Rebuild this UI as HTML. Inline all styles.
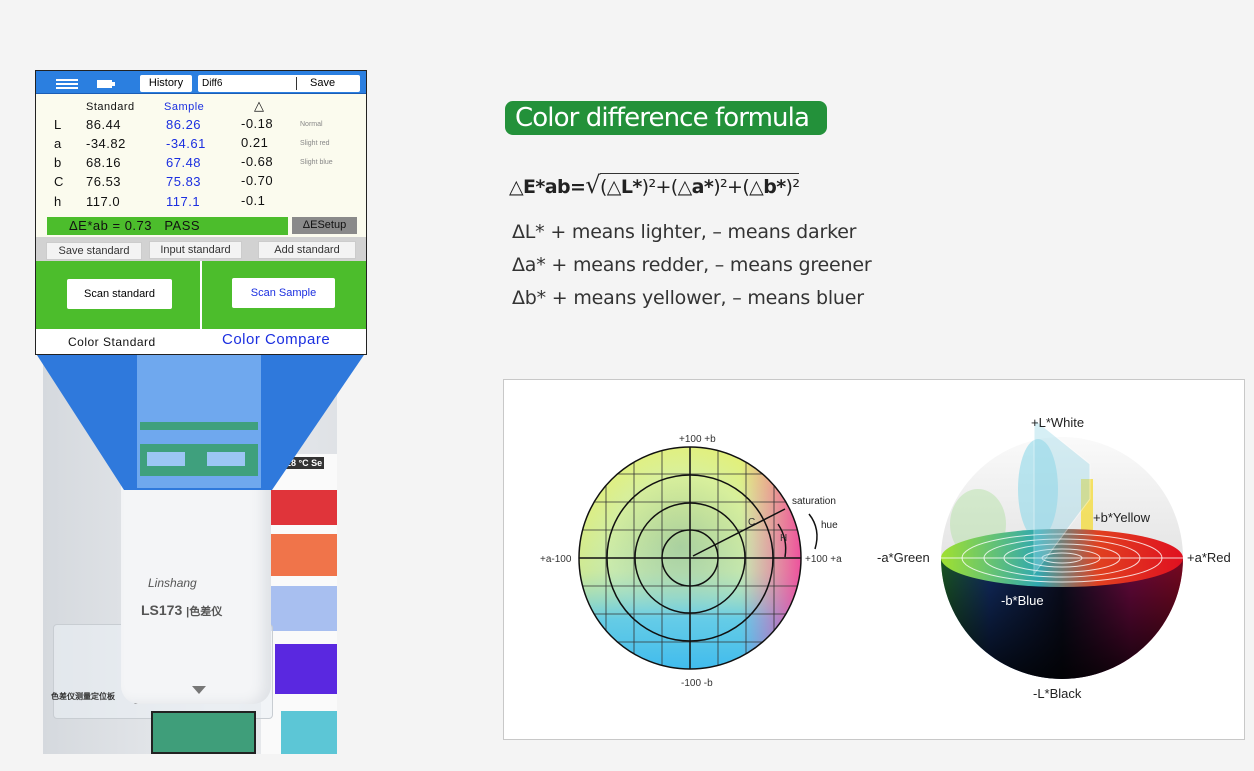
<!DOCTYPE html>
<html><head><meta charset="utf-8"><style>
*{margin:0;padding:0;box-sizing:border-box}
body{width:1254px;height:771px;background:#f4f4f4;position:relative;overflow:hidden;font-family:"Liberation Sans",sans-serif}
.a{position:absolute}
.t{position:absolute;font-size:13px;color:#111;white-space:nowrap;letter-spacing:0.5px}
.bl{color:#1b2fe0}
.sm{font-size:7px;color:#888;letter-spacing:0}
.btn{position:absolute;background:#f3f3f3;border:1px solid #ccc;font-size:11px;color:#333;text-align:center;line-height:16px}
.rt{position:absolute;font-size:19px;color:#333;white-space:nowrap;font-family:"DejaVu Sans","Liberation Sans",sans-serif;letter-spacing:-0.2px}
</style></head><body>

<!-- photo -->
<div class="a" style="left:43px;top:354px;width:294px;height:400px;background:linear-gradient(90deg,#d5d9de,#e9ebee 60%,#dfe2e6);overflow:hidden">
  <div class="a" style="left:218px;top:100px;width:80px;height:300px;background:#fafafa"></div>
  <div class="a" style="left:225px;top:103px;font-size:9px;font-weight:bold;color:#fff;background:#333;padding:1px 2px">n T 28 °C Se</div>
  <div class="a" style="left:223px;top:136px;width:75px;height:35px;background:#e0343a"></div>
  <div class="a" style="left:222px;top:180px;width:76px;height:42px;background:#f0744a"></div>
  <div class="a" style="left:223px;top:232px;width:75px;height:45px;background:#a8bff0"></div>
  <div class="a" style="left:232px;top:290px;width:66px;height:50px;background:#5a28e0"></div>
  <div class="a" style="left:238px;top:357px;width:60px;height:43px;background:#5cc6d6"></div>
  <div class="a" style="left:10px;top:270px;width:220px;height:95px;background:rgba(235,240,245,.6);border:1px solid #c8cdd2;border-radius:4px"></div>
  <div class="a" style="left:8px;top:337px;font-size:8px;font-weight:bold;color:#333">色差仪测量定位板</div>
  <div class="a" style="left:90px;top:343px;font-size:8px;font-weight:bold;color:#333">Chameleon-T Violet</div>
  <div class="a" style="left:108px;top:357px;width:105px;height:43px;background:#3f9e7a;border:2px solid #222"></div>
  <div class="a" style="left:78px;top:100px;width:150px;height:250px;background:#f4f5f7;border-radius:10px 10px 18px 18px;box-shadow:inset -8px 0 12px #dfe2e6"></div>
  <div class="a" style="left:83px;top:100px;width:142px;height:18px;background:#1c1c1e;border-radius:0 0 10px 10px"></div>
  <div class="a" style="left:105px;top:222px;font-size:12px;color:#555;font-style:italic">Linshang</div>
  <div class="a" style="left:98px;top:248px;font-size:14px;font-weight:bold;color:#555">LS173 <span style="font-size:11px">|色差仪</span></div>
  <div class="a" style="left:149px;top:332px;width:0;height:0;border-left:7px solid transparent;border-right:7px solid transparent;border-top:8px solid #777"></div>
</div>

<!-- blue wedge -->
<svg class="a" style="left:0;top:0" width="400" height="520"><polygon points="35,352 366,352 272,490 124,490" fill="#2f79dc"/></svg>
<div class="a" style="left:137px;top:352px;width:124px;height:136px;background:#6fa8ee;font-size:5px;color:#225">
  <div class="a" style="left:3px;top:70px;width:118px;height:8px;background:#3fa07d"></div>
  <div class="a" style="left:3px;top:92px;width:118px;height:32px;background:#3fa07d"></div>
  <div class="a" style="left:10px;top:100px;width:38px;height:14px;background:#9cc6f4"></div>
  <div class="a" style="left:70px;top:100px;width:38px;height:14px;background:#9cc6f4"></div>
</div>

<!-- screen -->
<div class="a" style="left:35px;top:70px;width:332px;height:285px;border:1px solid #222;background:#fff">
  <div class="a" style="left:0;top:0;width:330px;height:23px;background:#2b7fe0;border-bottom:1px solid #1b5db5"></div>
  <div class="a" style="left:20px;top:8px;width:22px;height:10px;border-top:2px solid #fff;border-bottom:2px solid #fff"><div style="margin-top:2px;border-top:2px solid #fff"></div></div>
  <div class="a" style="left:61px;top:9px;width:15px;height:8px;background:#fff"></div><div class="a" style="left:76px;top:11px;width:3px;height:4px;background:#fff"></div>
  <div class="a" style="left:104px;top:4px;width:52px;height:17px;background:#fff;border-radius:2px;font-size:11px;text-align:center;line-height:17px">History</div>
  <div class="a" style="left:162px;top:4px;width:162px;height:17px;background:#fff;border-radius:2px;font-size:10px;line-height:17px;padding-left:4px">Diff6<span class="a" style="left:98px;top:2px;height:13px;border-left:1px solid #333"></span><span class="a" style="left:112px;font-size:11px">Save</span></div>
  <div class="a" style="left:0;top:23px;width:330px;height:143px;background:#fbfbee"></div>
  <div class="t" style="left:50px;top:30px;font-size:11px">Standard</div>
  <div class="t bl" style="left:128px;top:30px;font-size:11px">Sample</div>
  <div class="t" style="left:218px;top:27px">△</div>
  <div class="t" style="left:18px;top:46px">L</div><div class="t" style="left:50px;top:46px">86.44</div><div class="t bl" style="left:130px;top:46px">86.26</div><div class="t" style="left:205px;top:45px">-0.18</div><div class="t sm" style="left:264px;top:50px">Normal</div>
  <div class="t" style="left:18px;top:65px">a</div><div class="t" style="left:50px;top:65px">-34.82</div><div class="t bl" style="left:130px;top:65px">-34.61</div><div class="t" style="left:205px;top:64px">0.21</div><div class="t sm" style="left:264px;top:69px">Slight red</div>
  <div class="t" style="left:18px;top:84px">b</div><div class="t" style="left:50px;top:84px">68.16</div><div class="t bl" style="left:130px;top:84px">67.48</div><div class="t" style="left:205px;top:83px">-0.68</div><div class="t sm" style="left:264px;top:88px">Slight blue</div>
  <div class="t" style="left:18px;top:103px">C</div><div class="t" style="left:50px;top:103px">76.53</div><div class="t bl" style="left:130px;top:103px">75.83</div><div class="t" style="left:205px;top:102px">-0.70</div>
  <div class="t" style="left:18px;top:123px">h</div><div class="t" style="left:50px;top:123px">117.0</div><div class="t bl" style="left:130px;top:123px">117.1</div><div class="t" style="left:205px;top:122px">-0.1</div>
  <div class="a" style="left:11px;top:146px;width:241px;height:18px;background:#4cbd2c;font-size:13px;line-height:18px;padding-left:22px;color:#111;letter-spacing:0.5px">ΔE*ab = 0.73 &nbsp;&nbsp;PASS</div>
  <div class="a" style="left:256px;top:146px;width:65px;height:17px;background:#8a8a8a;font-size:11px;line-height:17px;text-align:center;color:#111">ΔESetup</div>
  <div class="a" style="left:0;top:166px;width:330px;height:24px;background:#d2d2d2"></div>
  <div class="btn" style="left:10px;top:171px;width:96px">Save standard</div>
  <div class="btn" style="left:113px;top:170px;width:93px">Input standard</div>
  <div class="btn" style="left:222px;top:170px;width:98px">Add standard</div>
  <div class="a" style="left:0;top:190px;width:330px;height:68px;background:#4cbd2c"></div>
  <div class="a" style="left:164px;top:190px;width:2px;height:68px;background:#fff"></div>
  <div class="a" style="left:31px;top:208px;width:105px;height:30px;background:#fff;border-radius:2px;font-size:11px;line-height:30px;text-align:center">Scan standard</div>
  <div class="a" style="left:196px;top:207px;width:103px;height:30px;background:#fff;border-radius:2px;font-size:11px;line-height:30px;text-align:center;color:#1b2fe0">Scan Sample</div>
  <div class="t" style="left:32px;top:264px;font-size:12px">Color Standard</div>
  <div class="t bl" style="left:186px;top:260px;font-size:15px">Color Compare</div>
</div>

<!-- right text -->
<div class="a" style="left:505px;top:101px;width:322px;height:34px;background:#23913a;border-radius:8px;color:#fff;font-size:26px;line-height:34px;padding-left:10px;font-family:'DejaVu Sans',sans-serif;letter-spacing:-0.9px">Color difference formula</div>
<div class="rt" style="left:509px;top:171px;color:#222;font-size:19px;letter-spacing:-0.6px"><b>△E*ab=</b><span style="font-size:24px">√</span><span style="border-top:1px solid #333;padding-top:2px">(△<b>L*</b>)²+(△<b>a*</b>)²+(△<b>b*</b>)²</span></div>
<div class="rt" style="left:512px;top:221px">ΔL* + means lighter, – means darker</div>
<div class="rt" style="left:512px;top:254px">Δa* + means redder, – means greener</div>
<div class="rt" style="left:512px;top:287px">Δb* + means yellower, – means bluer</div>

<!-- diagram box -->
<div class="a" style="left:503px;top:379px;width:742px;height:361px;background:#fff;border:1px solid #c8c8c8"></div>
<svg class="a" style="left:503px;top:379px" width="742" height="361" font-family="Liberation Sans" font-size="10">
<defs>
<radialGradient id="g1" cx="0.45" cy="0.45" r="0.6"><stop offset="0" stop-color="#a8cc98"/><stop offset="0.5" stop-color="#d8f0a0"/><stop offset="1" stop-color="#eef050"/></radialGradient>
<linearGradient id="g2" x1="0" y1="0" x2="0" y2="1"><stop offset="0" stop-color="#f2f24a" stop-opacity="0"/><stop offset="0.55" stop-color="#9ed8d0" stop-opacity="0.3"/><stop offset="0.75" stop-color="#58c8f0" stop-opacity="0.9"/><stop offset="1" stop-color="#38b8f0"/></linearGradient>
<linearGradient id="g3" x1="0" y1="0" x2="1" y2="0"><stop offset="0.7" stop-color="#f050c0" stop-opacity="0"/><stop offset="0.95" stop-color="#f040a0" stop-opacity="0.9"/></linearGradient>
<clipPath id="c"><circle cx="187" cy="179" r="111"/></clipPath>
<linearGradient id="s1" x1="0" y1="0" x2="0" y2="1"><stop offset="0" stop-color="#fafafa"/><stop offset="0.7" stop-color="#dcdcdc"/></linearGradient>
<linearGradient id="s2" x1="0" y1="0" x2="1" y2="0"><stop offset="0" stop-color="#30a040"/><stop offset="0.2" stop-color="#2050b0"/><stop offset="0.5" stop-color="#141838"/><stop offset="0.78" stop-color="#c01070"/><stop offset="1" stop-color="#e0103a"/></linearGradient>
<linearGradient id="s3" x1="0" y1="0" x2="0" y2="1"><stop offset="0" stop-color="#000" stop-opacity="0"/><stop offset="1" stop-color="#000" stop-opacity="0.9"/></linearGradient>
<linearGradient id="s4" x1="0" y1="0" x2="1" y2="0"><stop offset="0" stop-color="#a0e030"/><stop offset="0.4" stop-color="#30a8b0"/><stop offset="0.65" stop-color="#e04020"/><stop offset="1" stop-color="#e01020"/></linearGradient>
<clipPath id="lo"><rect x="430" y="179" width="260" height="200"/></clipPath>
</defs>
<g clip-path="url(#c)">
<rect x="70" y="60" width="240" height="240" fill="url(#g1)"/>
<rect x="70" y="60" width="240" height="240" fill="url(#g2)"/>
<rect x="70" y="60" width="240" height="240" fill="url(#g3)"/>
<g stroke="#333" stroke-width="0.8">
<path d="M103 60V300M131 60V300M159 60V300M215 60V300M243 60V300M271 60V300M70 95H310M70 123H310M70 151H310M70 207H310M70 235H310M70 263H310"/>
</g>
</g>
<g fill="none" stroke="#111" stroke-width="1.5">
<circle cx="187" cy="179" r="111"/><circle cx="187" cy="179" r="83"/><circle cx="187" cy="179" r="55"/><circle cx="187" cy="179" r="28"/>
<path d="M76 179H298M187 68V290"/>
<path d="M190 177L282 130"/>
<path d="M275 145Q285 160 282 178"/>
<path d="M306 135Q318 150 312 170"/>
</g>
<text x="176" y="63" fill="#333">+100 +b</text><text x="178" y="307" fill="#333">-100 -b</text>
<text x="37" y="183" fill="#333">+a-100</text><text x="302" y="183" fill="#333">+100 +a</text>
<text x="289" y="125" fill="#222">saturation</text><text x="318" y="149" fill="#222">hue</text>
<text x="245" y="146" fill="#333">C</text><text x="277" y="162" fill="#333">H</text>

<circle cx="559" cy="179" r="121" fill="url(#s1)"/>
<ellipse cx="535" cy="110" rx="20" ry="50" fill="#8fd8ea" opacity="0.6"/>
<ellipse cx="475" cy="145" rx="28" ry="35" fill="#b0e0a0" opacity="0.45"/>
<rect x="578" y="100" width="12" height="72" fill="#f4dc40" opacity="0.8"/>
<g clip-path="url(#lo)"><circle cx="559" cy="179" r="121" fill="url(#s2)"/><circle cx="559" cy="179" r="121" fill="url(#s3)"/></g>
<ellipse cx="559" cy="179" rx="121" ry="29" fill="url(#s4)"/>
<g fill="none" stroke="#fff" stroke-opacity="0.8" stroke-width="1"><ellipse cx="559" cy="179" rx="100" ry="24"/><ellipse cx="559" cy="179" rx="78" ry="19"/><ellipse cx="559" cy="179" rx="58" ry="14"/><ellipse cx="559" cy="179" rx="38" ry="9"/><ellipse cx="559" cy="179" rx="20" ry="5"/><path d="M438 179H680"/></g>
<polygon points="531,40 531,195 587,120 587,85" fill="#9ad8e8" opacity="0.4" stroke="#fff"/>
<text x="528" y="48" font-size="13" fill="#222">+L*White</text>
<text x="590" y="143" font-size="13" fill="#222">+b*Yellow</text>
<text x="374" y="183" font-size="13" fill="#222">-a*Green</text>
<text x="684" y="183" font-size="13" fill="#222">+a*Red</text>
<text x="498" y="226" font-size="13" fill="#fff">-b*Blue</text>
<text x="530" y="319" font-size="13" fill="#222">-L*Black</text>
</svg>
</body></html>
